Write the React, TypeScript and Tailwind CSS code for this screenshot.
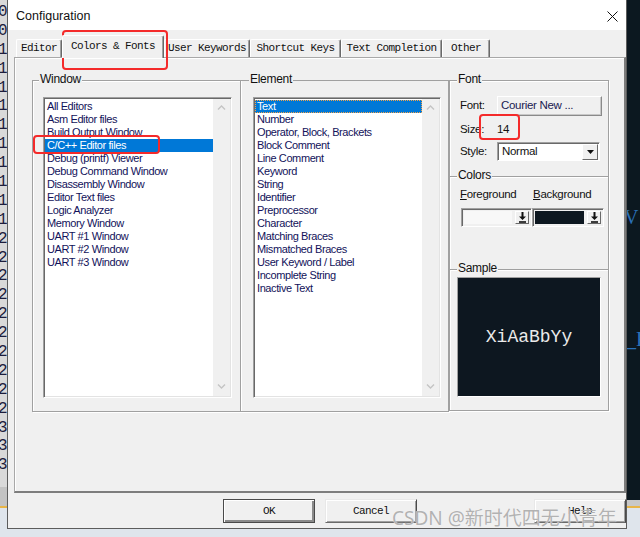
import React from 'react';

const windows = [
    "All Editors",
    "Asm Editor files",
    "Build Output Window",
    "C/C++ Editor files",
    "Debug (printf) Viewer",
    "Debug Command Window",
    "Disassembly Window",
    "Editor Text files",
    "Logic Analyzer",
    "Memory Window",
    "UART #1 Window",
    "UART #2 Window",
    "UART #3 Window",
];

const elements = [
    "Text",
    "Number",
    "Operator, Block, Brackets",
    "Block Comment",
    "Line Comment",
    "Keyword",
    "String",
    "Identifier",
    "Preprocessor",
    "Character",
    "Matching Braces",
    "Mismatched Braces",
    "User Keyword / Label",
    "Incomplete String",
    "Inactive Text",
];

const tabs = [
    { name: "Editor", w: "w-[46px]" },
    { name: "Colors & Fonts", w: "w-[102px]", active: true },
    { name: "User Keywords", w: "w-[86px]" },
    { name: "Shortcut Keys", w: "w-[91px]" },
    { name: "Text Completion", w: "w-[101px]" },
    { name: "Other", w: "w-[48px]" },
];

// editor line numbers peeking out behind the dialog
const gutter = ["0", "0", "1", "1", "1", "1", "1", "1", "1", "1", "1", "1", "2", "2", "2", "2", "2", "2", "2", "2", "2", "2", "3", "3", "3"];

const mono = "font-['Liberation_Mono','Courier_New',monospace]";

const Chevron = ({ down }: { down?: boolean }) => (
    <svg width="9" height="5" viewBox="0 0 9 5" className={down ? "rotate-180" : ""}>
        <path d="M1 4.5L4.5 1L8 4.5" stroke="#c4c4c4" strokeWidth="1.4" fill="none" />
    </svg>
);

const DropArrow = () => (
    <svg width="9" height="11" viewBox="0 0 9 11">
        <path d="M3.5 0h2v4.5h2.5L4.5 8L1 4.5h2.5z" fill="#111" />
        <rect x="1" y="9.2" width="7" height="1.6" fill="#111" />
    </svg>
);

const ListBox = ({ items, selected, width, focus }: { items: string[]; selected: number; width: string; focus?: boolean }) => (
    <div className={`flex h-[301px] ${width} border border-t-[#a0a0a0] border-l-[#a0a0a0] border-r-white border-b-white bg-white shadow-[inset_1px_1px_0_#696969,inset_-1px_-1px_0_#e3e3e3]`}>
        <div className="flex-1 pt-[2px] pl-[1px]">
            {items.map((item, i) => (
                <div
                    key={item}
                    className={`h-[13px] px-[2px] text-[11px] leading-[13px] tracking-[-0.4px] whitespace-nowrap ${
                        i === selected
                            ? `bg-[#0078d7] text-white ${focus ? "outline outline-1 outline-dotted outline-[#f3a34a] -outline-offset-1" : ""}`
                            : "text-[#12125a]"
                    }`}
                >
                    {item}
                </div>
            ))}
        </div>
        <div className="my-[1px] mr-[1px] flex w-[17px] flex-col items-center justify-between bg-[#f0f0f0] pt-[6px] pb-[7px]">
            <Chevron />
            <Chevron down />
        </div>
    </div>
);

const GroupLabel = ({ text, ml }: { text: string; ml: string }) => (
    <div className={`-mt-[9px] ${ml} w-fit bg-[#f0f0f0] px-[1px] text-[12px] leading-[14px] tracking-[-0.3px] text-[#111]`}>
        {text}
    </div>
);

const Separator = ({ text, mt }: { text: string; mt: string }) => (
    <>
        <div className={`${mt} border-t border-[#a0a0a0] shadow-[0_1px_0_#fff]`} />
        <GroupLabel text={text} ml="ml-[7px]" />
    </>
);

const ColorPicker = ({ swatch, w }: { swatch: string; w: string }) => (
    <div className={`flex h-[19px] ${w} items-stretch border border-t-[#a0a0a0] border-l-[#a0a0a0] border-r-white border-b-white p-[2px] shadow-[inset_1px_1px_0_#696969]`}>
        <div className={`flex-1 ${swatch}`} />
        <div className="ml-[3px] flex w-[14px] items-center justify-center border border-t-white border-l-white border-r-[#696969] border-b-[#696969] bg-[#f0f0f0]">
            <DropArrow />
        </div>
    </div>
);

const FontBox = () => (
    <div className="flex h-[331px] w-[160px] flex-col border border-[#a0a0a0] shadow-[inset_1px_1px_0_#fff,1px_1px_0_#fff]">
        <GroupLabel text="Font" ml="ml-[7px]" />
        <div className="text-[11.5px] tracking-[-0.3px] text-[#111]">
            <div className="mt-[10px] flex h-[20px] items-center pl-[10px]">
                <span className="w-[37px]">Font:</span>
                <div className="flex h-[20px] w-[105px] items-center border border-t-white border-l-white border-r-[#8a8a8a] border-b-[#8a8a8a] pl-[3px] text-[#1a1a50] shadow-[inset_-1px_-1px_0_#c8c8c8]">
                    Courier New ...
                </div>
            </div>
            <div className="mt-[7px] flex h-[14px] items-center pl-[10px]">
                <span className="w-[37px]">Size:</span>
                <span>14</span>
            </div>
            <div className="mt-[5px] flex h-[19px] items-center pl-[10px]">
                <span className="w-[37px]">Style:</span>
                <div className="flex h-[19px] w-[103px] items-center border border-t-[#a0a0a0] border-l-[#a0a0a0] border-r-white border-b-white bg-white pl-[4px] shadow-[inset_1px_1px_0_#696969]">
                    <span className="flex-1">Normal</span>
                    <div className="mr-[1px] flex h-[16px] w-[16px] items-center justify-center border border-t-white border-l-white border-r-[#696969] border-b-[#696969] bg-[#f0f0f0]">
                        <svg width="7" height="4" viewBox="0 0 7 4">
                            <path d="M0 0h7L3.5 4z" fill="#111" />
                        </svg>
                    </div>
                </div>
            </div>
        </div>
        <Separator text="Colors" mt="mt-[15px]" />
        <div className="mt-[6px] flex h-[14px] items-center pl-[10px] text-[11.5px] tracking-[-0.3px] text-[#111]">
            <span className="w-[73px]"><span className="underline">F</span>oreground</span>
            <span><span className="underline">B</span>ackground</span>
        </div>
        <div className="mt-[6px] flex pl-[11px]">
            <ColorPicker swatch="bg-[#f8f8f8]" w="w-[71px]" />
            <ColorPicker swatch="bg-[#0d1720]" w="w-[72px]" />
        </div>
        <Separator text="Sample" mt="mt-[42px]" />
        <div className={`mt-[2px] ml-[7px] flex h-[120px] w-[144px] items-center justify-center border border-t-[#a0a0a0] border-l-[#a0a0a0] border-r-white border-b-white bg-[#0d1720] ${mono} text-[18px] text-[#eaeaea]`}>
            XiAaBbYy
        </div>
    </div>
);

const Dialog = () => (
    <div className="flex h-[529px] w-[625px] flex-col border-x border-b border-[#5c5c5c] bg-[#f0f0f0]">
        {/* title bar */}
        <div className="flex h-[30px] items-center justify-between bg-white pt-[2px] pl-[8px] pr-[8px]">
            <span className="text-[12.5px] text-[#111]">Configuration</span>
            <svg width="11" height="11" viewBox="0 0 11 11">
                <path d="M0.5 0.5l10 10M10.5 0.5l-10 10" stroke="#111" strokeWidth="1" />
            </svg>
        </div>

        {/* tabs */}
        <div className="flex h-[27px] items-end pl-[8px]">
            {tabs.map((tab) => (
                <div
                    key={tab.name}
                    className={`${tab.w} flex items-center justify-center rounded-t-[2px] border-t border-l border-white border-r border-r-[#696969] shadow-[inset_-1px_0_0_#a0a0a0] ${mono} text-[11px] tracking-[-0.6px] text-[#111] ${
                        tab.active ? "relative z-10 -mb-[1px] h-[23px] bg-[#f0f0f0] pb-[2px]" : "h-[18px]"
                    }`}
                >
                    {tab.name}
                </div>
            ))}
        </div>

        {/* tab page */}
        <div className="ml-[6px] flex h-[436px] w-[612px] items-start border-t border-l border-[#a8a8a8] border-r-2 border-b-2 border-r-[#7d7d7d] border-b-[#7d7d7d] pt-[22px] pl-[17px] shadow-[inset_1px_1px_0_#fff]">
            <div className="flex h-[332px] w-[209px] flex-col border border-[#a0a0a0] shadow-[inset_1px_1px_0_#fff,1px_1px_0_#fff]">
                <GroupLabel text="Window" ml="ml-[6px]" />
                <div className="mt-[11px] ml-[10px]">
                    <ListBox items={windows} selected={3} width="w-[189px]" />
                </div>
            </div>
            <div className="flex h-[332px] w-[208px] flex-col border border-l-0 border-[#a0a0a0] shadow-[1px_1px_0_#fff]">
                <GroupLabel text="Element" ml="ml-[8px]" />
                <div className="mt-[11px] ml-[12px]">
                    <ListBox items={elements} selected={0} width="w-[188px]" focus />
                </div>
            </div>
            <FontBox />
        </div>

        {/* buttons */}
        <div className={`mt-[6px] flex pl-[215px] ${mono} text-[11px] tracking-[-0.6px] text-[#111]`}>
            <button className="flex h-[24px] w-[92px] items-center justify-center border border-[#4a4a4a] bg-[#f0f0f0] shadow-[inset_1px_1px_0_#fff,inset_-2px_-2px_0_#8a8a8a]">
                OK
            </button>
            <button className="ml-[10px] flex h-[24px] w-[92px] items-center justify-center border border-t-[#e8e8e8] border-l-[#e8e8e8] border-r-[#4a4a4a] border-b-[#6a6a6a] bg-[#f0f0f0] shadow-[inset_1px_1px_0_#fff,inset_-1px_-1px_0_#a0a0a0]">
                Cancel
            </button>
            <button className="ml-[117px] flex h-[24px] w-[92px] items-center justify-center border border-t-[#e8e8e8] border-l-[#e8e8e8] border-r-[#4a4a4a] border-b-[#6a6a6a] bg-[#f0f0f0] shadow-[inset_1px_1px_0_#fff,inset_-1px_-1px_0_#a0a0a0]">
                Help
            </button>
        </div>
    </div>
);

export default function App() {
    return (
        <div className="relative flex h-[537px] w-[640px] overflow-hidden bg-[#dfe5ec] font-['Liberation_Sans',Arial,sans-serif]">
            {/* editor gutter on the left */}
            <div className="flex w-[7px] flex-col">
                <div className="h-[487px] overflow-hidden bg-[#d9d9d9] pt-[3px]">
                    {gutter.map((n, i) => (
                        <div key={i} className={`-ml-[2px] h-[18.9px] ${mono} text-[16px] leading-[18.9px] text-[#1c1c3c]`}>
                            {n}
                        </div>
                    ))}
                </div>
                <div className="h-[19px] bg-[#c3c3c3]" />
                <div className="h-[2px] bg-[#e8b548]" />
                <div className="flex-1 bg-[#dfe5ec]" />
            </div>

            <Dialog />

            {/* dark editor on the right */}
            <div className="flex flex-1 flex-col">
                <div className="h-[500px] overflow-hidden bg-[#0c1820] pt-[206px] font-['Liberation_Serif',serif] text-[20px] leading-[22px] text-[#2a70b8]">
                    <div className="-ml-[3px]">V</div>
                    <div className="mt-[100px] -ml-[1px]">_F</div>
                </div>
                <div className="h-[6px] bg-[#c8c8c8]" />
                <div className="h-[2px] bg-[#e8b548]" />
                <div className="flex-1 bg-[#dfe5ec]" />
            </div>

            {/* annotation boxes */}
            <div className="absolute left-[62px] top-[30px] h-[40px] w-[106px] rounded-[4px] border-2 border-[#f42a2a]" />
            <div className="absolute left-[33px] top-[135px] h-[19px] w-[127px] rounded-[4px] border-2 border-[#f42a2a]" />
            <div className="absolute left-[479px] top-[114px] h-[26px] w-[41px] rounded-[4px] border-2 border-[#f42a2a]" />

            {/* watermark */}
            <div className="absolute left-[392px] top-[505px] whitespace-nowrap font-['Noto_Sans','Noto_Sans_CJK_SC',sans-serif] text-[19px] leading-[26px] text-[#b2b2b2] [text-shadow:0_0_1px_#ffffff]">
                CSDN @新时代四无小青年
            </div>
        </div>
    );
}
